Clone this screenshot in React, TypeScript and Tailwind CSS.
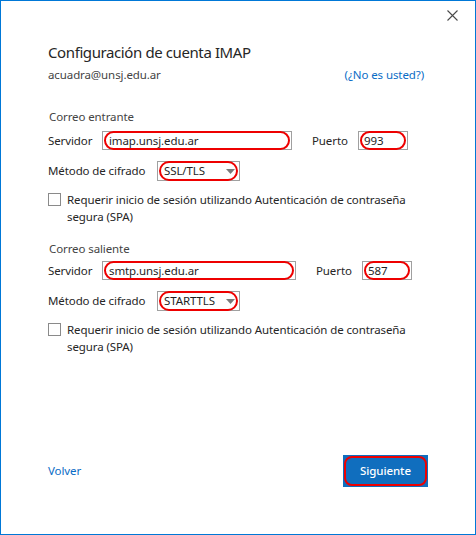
import React from "react";

function Field({ value, width, textPl = "pl-[6px]" }: { value: string; width: string; textPl?: string }) {
  return (
    <div className={`relative h-[19px] border border-[#a0a0a0] bg-white flex items-center ${width} ${textPl}`}>
      <span className="text-[11.5px] leading-none text-[#1f1f1f]">{value}</span>
      <div className="absolute inset-x-[1px] -inset-y-[1px] rounded-full border-2 border-[#ee0000]" />
    </div>
  );
}

function Select({ value }: { value: string }) {
  return (
    <div className="relative h-[20px] w-[83px] border border-[#a0a0a0] bg-white flex items-center pl-[6px]">
      <span className="text-[11.5px] leading-none text-[#1f1f1f]">{value}</span>
      <svg className="absolute left-[68px] top-[7px]" width="9" height="5" viewBox="0 0 9 5">
        <path d="M0 0 L9 0 L4.5 5 Z" fill="#7a7a7a" />
      </svg>
      <div className="absolute inset-x-[1px] -inset-y-[1px] rounded-full border-2 border-[#ee0000]" />
    </div>
  );
}

function Checkbox() {
  return (
    <div className="flex items-start gap-[6px]">
      <div className="mt-[2px] h-[13px] w-[13px] shrink-0 border border-[#8a8a8a] bg-white" />
      <div className="text-[11.5px] leading-[17px] tracking-[-0.1px] text-[#262626]">
        Requerir inicio de sesión utilizando Autenticación de contraseña
        <br />
        segura (SPA)
      </div>
    </div>
  );
}

export default function App() {
  return (
    <div
      className="relative flex h-[535px] w-[476px] flex-col border border-[#0078d7] bg-white text-[#262626] tracking-[-0.1px]"
      style={{ fontFamily: '"Segoe UI", "Noto Sans", Arial, sans-serif' }}
    >
      <div className="flex h-[29px] items-center justify-end pr-[17px]">
        <svg width="11" height="11" viewBox="0 0 11 11">
          <path d="M0.5 0.5 L10.5 10.5 M10.5 0.5 L0.5 10.5" stroke="#4a4a4a" strokeWidth="1.1" />
        </svg>
      </div>

      <div className="flex flex-1 flex-col px-[47px]">
        <div className="mt-[10px] text-[15px] leading-[24px] tracking-[-0.4px] text-[#262626]">
          Configuración de cuenta IMAP
        </div>
        <div className="mt-[2px] flex items-center justify-between pr-[4px] text-[11.5px] leading-[18px]">
          <span className="text-[#444]">acuadra@unsj.edu.ar</span>
          <span className="text-[#0a6cc6]">(¿No es usted?)</span>
        </div>

        <div className="mt-[24px] pl-[1px] text-[11.5px] leading-[18px] text-[#444]">Correo entrante</div>
        <div className="mt-[5px] flex items-center text-[11.5px]">
          <span className="w-[54px]">Servidor</span>
          <Field value="imap.unsj.edu.ar" width="w-[190px]" />
          <span className="ml-[20px] w-[46px]">Puerto</span>
          <Field value="993" width="w-[50px]" textPl="pl-[5px]" />
        </div>
        <div className="mt-[11px] flex items-center text-[11.5px]">
          <span className="w-[109px]">Método de cifrado</span>
          <Select value="SSL/TLS" />
        </div>
        <div className="mt-[10px]">
          <Checkbox />
        </div>

        <div className="mt-[15px] pl-[1px] text-[11.5px] leading-[18px] text-[#444]">Correo saliente</div>
        <div className="mt-[3px] flex items-center text-[11.5px]">
          <span className="w-[54px]">Servidor</span>
          <Field value="smtp.unsj.edu.ar" width="w-[194px]" />
          <span className="ml-[20px] w-[46px]">Puerto</span>
          <Field value="587" width="w-[50px]" textPl="pl-[5px]" />
        </div>
        <div className="mt-[11px] flex items-center text-[11.5px]">
          <span className="w-[109px]">Método de cifrado</span>
          <Select value="STARTTLS" />
        </div>
        <div className="mt-[10px]">
          <Checkbox />
        </div>

        <div className="mb-[47px] mt-auto flex items-center justify-between">
          <span className="text-[11.5px] text-[#0a6cc6]">Volver</span>
          <div className="relative flex h-[32px] w-[85px] items-center justify-center bg-[#106ebe]">
            <span className="text-[11.5px] font-medium text-white">Siguiente</span>
            <div className="absolute inset-[1px] rounded-[8px] border-2 border-[#ee0000]" />
          </div>
        </div>
      </div>
    </div>
  );
}
